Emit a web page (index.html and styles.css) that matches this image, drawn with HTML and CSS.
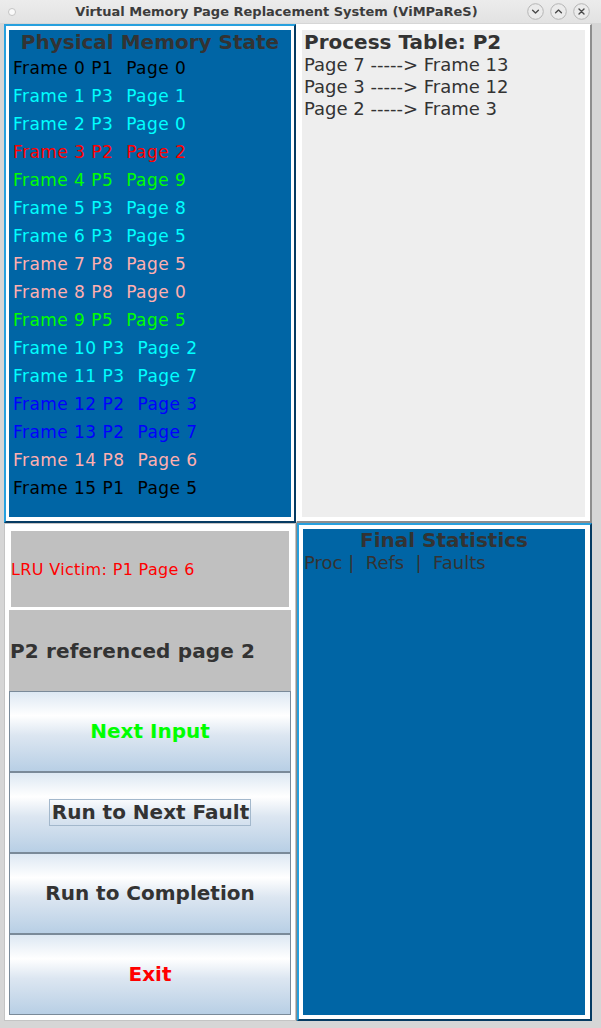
FILE: index.html
```html
<!DOCTYPE html>
<html>
<head>
<meta charset="utf-8">
<title>ViMPaReS</title>
<link rel="stylesheet" href="styles.css">
</head>
<body>
<div class="window">
  <header class="titlebar">
    <span class="dot"></span>
    <span class="title">Virtual Memory Page Replacement System (ViMPaReS)</span>
    <div class="winbtns">
      <svg class="wb" viewBox="0 0 17 17"><circle cx="8.5" cy="8.5" r="7.8" class="wbc"/><path d="M5.6 7.2 L8.5 10 L11.4 7.2" class="wbi"/></svg>
      <svg class="wb" viewBox="0 0 17 17"><circle cx="8.5" cy="8.5" r="7.8" class="wbc"/><path d="M5.6 9.8 L8.5 7 L11.4 9.8" class="wbi"/></svg>
      <svg class="wb" viewBox="0 0 17 17"><circle cx="8.5" cy="8.5" r="7.8" class="wbc"/><path d="M6 6 L11 11 M11 6 L6 11" class="wbi"/></svg>
    </div>
  </header>
  <main class="grid">
    <section class="panel memory">
      <div class="blue">
        <h2 class="heading center">Physical Memory State</h2>
        <ul class="frames">
          <li class="c-black">Frame 0 P1<span class="pg">Page 0</span></li>
          <li class="c-cyan">Frame 1 P3<span class="pg">Page 1</span></li>
          <li class="c-cyan">Frame 2 P3<span class="pg">Page 0</span></li>
          <li class="c-red">Frame 3 P2<span class="pg">Page 2</span></li>
          <li class="c-green">Frame 4 P5<span class="pg">Page 9</span></li>
          <li class="c-cyan">Frame 5 P3<span class="pg">Page 8</span></li>
          <li class="c-cyan">Frame 6 P3<span class="pg">Page 5</span></li>
          <li class="c-pink">Frame 7 P8<span class="pg">Page 5</span></li>
          <li class="c-pink">Frame 8 P8<span class="pg">Page 0</span></li>
          <li class="c-green">Frame 9 P5<span class="pg">Page 5</span></li>
          <li class="c-cyan">Frame 10 P3<span class="pg">Page 2</span></li>
          <li class="c-cyan">Frame 11 P3<span class="pg">Page 7</span></li>
          <li class="c-blue">Frame 12 P2<span class="pg">Page 3</span></li>
          <li class="c-blue">Frame 13 P2<span class="pg">Page 7</span></li>
          <li class="c-pink">Frame 14 P8<span class="pg">Page 6</span></li>
          <li class="c-black">Frame 15 P1<span class="pg">Page 5</span></li>
        </ul>
      </div>
    </section>
    <section class="panel ptable">
      <div class="gray">
        <h2 class="heading">Process Table: P2</h2>
        <ul class="maps">
          <li>Page 7 -----&gt; Frame 13</li>
          <li>Page 3 -----&gt; Frame 12</li>
          <li>Page 2 -----&gt; Frame 3</li>
        </ul>
      </div>
    </section>
    <section class="panel controls">
      <div class="victim">LRU Victim: P1 Page 6</div>
      <div class="status">P2 referenced page 2</div>
      <button class="btn c-green">Next Input</button>
      <button class="btn"><span class="focus">Run to Next Fault</span></button>
      <button class="btn">Run to Completion</button>
      <button class="btn c-red">Exit</button>
    </section>
    <section class="panel stats">
      <div class="blue">
        <h2 class="heading center tight">Final Statistics</h2>
        <p class="cols">Proc |  Refs  |  Faults</p>
      </div>
    </section>
  </main>
</div>
</body>
</html>
```

FILE: styles.css
```css
* { box-sizing: border-box; }
html, body { margin: 0; padding: 0; }
body {
  width: 601px;
  height: 1028px;
  background: #d6d6d6;
  font-family: "DejaVu Sans", "Noto Sans", sans-serif;
  color: #333333;
  overflow: hidden;
}
.window { width: 601px; height: 1028px; display: flex; flex-direction: column; }

.titlebar {
  height: 23px;
  display: flex;
  align-items: center;
  background: linear-gradient(#ececec, #e2e2e2);
  flex: none;
}
.dot {
  width: 8px; height: 8px;
  margin-left: 8px;
  border-radius: 50%;
  background: #fafafa;
  border: 1px solid #c4c4c4;
  flex: none;
}
.title {
  flex: 1;
  text-align: center;
  padding-left: 10px;
  font-weight: bold;
  font-size: 13px;
  color: #3c3c3c;
  white-space: nowrap;
}
.winbtns { display: flex; gap: 6px; margin-right: 11px; flex: none; }
.wb { width: 17px; height: 17px; display: block; }
.wbc { fill: #ebebeb; stroke: #b5b5b5; stroke-width: 1; }
.wbi { fill: none; stroke: #4a4a4a; stroke-width: 1.4; stroke-linecap: round; stroke-linejoin: round; }

.grid {
  margin-top: 1px;
  margin-left: 4px;
  display: grid;
  grid-template-columns: 292px 296px;
  grid-template-rows: 499px 498px;
}

.panel { background: #ffffff; }

.memory {
  border: 2px solid;
  border-color: #27a0de #063b62 #063b62 #27a0de;
  padding: 4px 3px 4px 3px;
}
.stats {
  border: 2px solid;
  border-color: #27a0de #063b62 #063b62 #27a0de;
  padding: 4px 5px 4px 4px;
  margin-left: 1px;
  box-shadow: -1px 0 0 #8c8c8c;
}
.blue { background: #0065a5; height: 100%; }

.ptable {
  border-style: solid;
  border-width: 1px 2px 2px 1px;
  border-color: #ffffff #8e8e8e #8e8e8e #ffffff;
  padding: 5px 5px 4px 5px;
}
.gray { background: #eeeeee; height: 100%; padding-left: 2px; }

.heading {
  margin: 0;
  font-size: 20px;
  font-weight: bold;
  line-height: 24px;
  color: #333333;
}
.center { text-align: center; }
.tight { line-height: 22px; }

.frames { list-style: none; margin: 0; padding: 0 0 0 4px; }
.frames li {
  font-size: 17px;
  letter-spacing: 0.45px;
  height: 28px;
  line-height: 28px;
  white-space: nowrap;
}
.pg { margin-left: 13px; }

.maps { list-style: none; margin: 0; padding: 0; }
.maps li { font-size: 18px; line-height: 22px; color: #333333; white-space: nowrap; }

.cols {
  margin: 0;
  font-size: 18px;
  line-height: 24px;
  white-space: pre;
  padding-left: 1px;
  color: #333333;
}

.controls {
  border: 1px solid #c4c4c4;
  padding: 6px 4px 4px 4px;
  display: flex;
  flex-direction: column;
}
.victim {
  margin: 1px 2px 3px 2px;
  height: 76px;
  background: #c0c0c0;
  display: flex;
  align-items: center;
  font-size: 16px;
  letter-spacing: 0.35px;
  color: #ff0000;
  white-space: nowrap;
}
.status {
  height: 81px;
  background: #c0c0c0;
  display: flex;
  align-items: center;
  padding-left: 1px;
  font-size: 20px;
  letter-spacing: 0.15px;
  font-weight: bold;
  color: #333333;
  white-space: nowrap;
}
.btn {
  height: 81px;
  width: 100%;
  margin: 0;
  padding: 0 0 1px 0;
  border: 1px solid #7a8a99;
  background: linear-gradient(#dde8f3 0%, #ffffff 30%, #dce6f1 55%, #b8cfe5 100%);
  font-family: "DejaVu Sans", "Noto Sans", sans-serif;
  font-size: 20px;
  font-weight: bold;
  color: #333333;
  display: flex;
  align-items: center;
  justify-content: center;
}
.focus {
  border: 1px solid #a3b8cc;
  padding: 1px 1px 2px 2px;
  line-height: 22px;
}

.c-black { color: #000000; }
.c-cyan { color: #00ffff; }
.c-red { color: #ff0000; }
.c-green { color: #00ff00; }
.c-pink { color: #ffafaf; }
.c-blue { color: #0000ff; }
.btn.c-green { color: #00ff00; }
.btn.c-red { color: #ff0000; }
```
